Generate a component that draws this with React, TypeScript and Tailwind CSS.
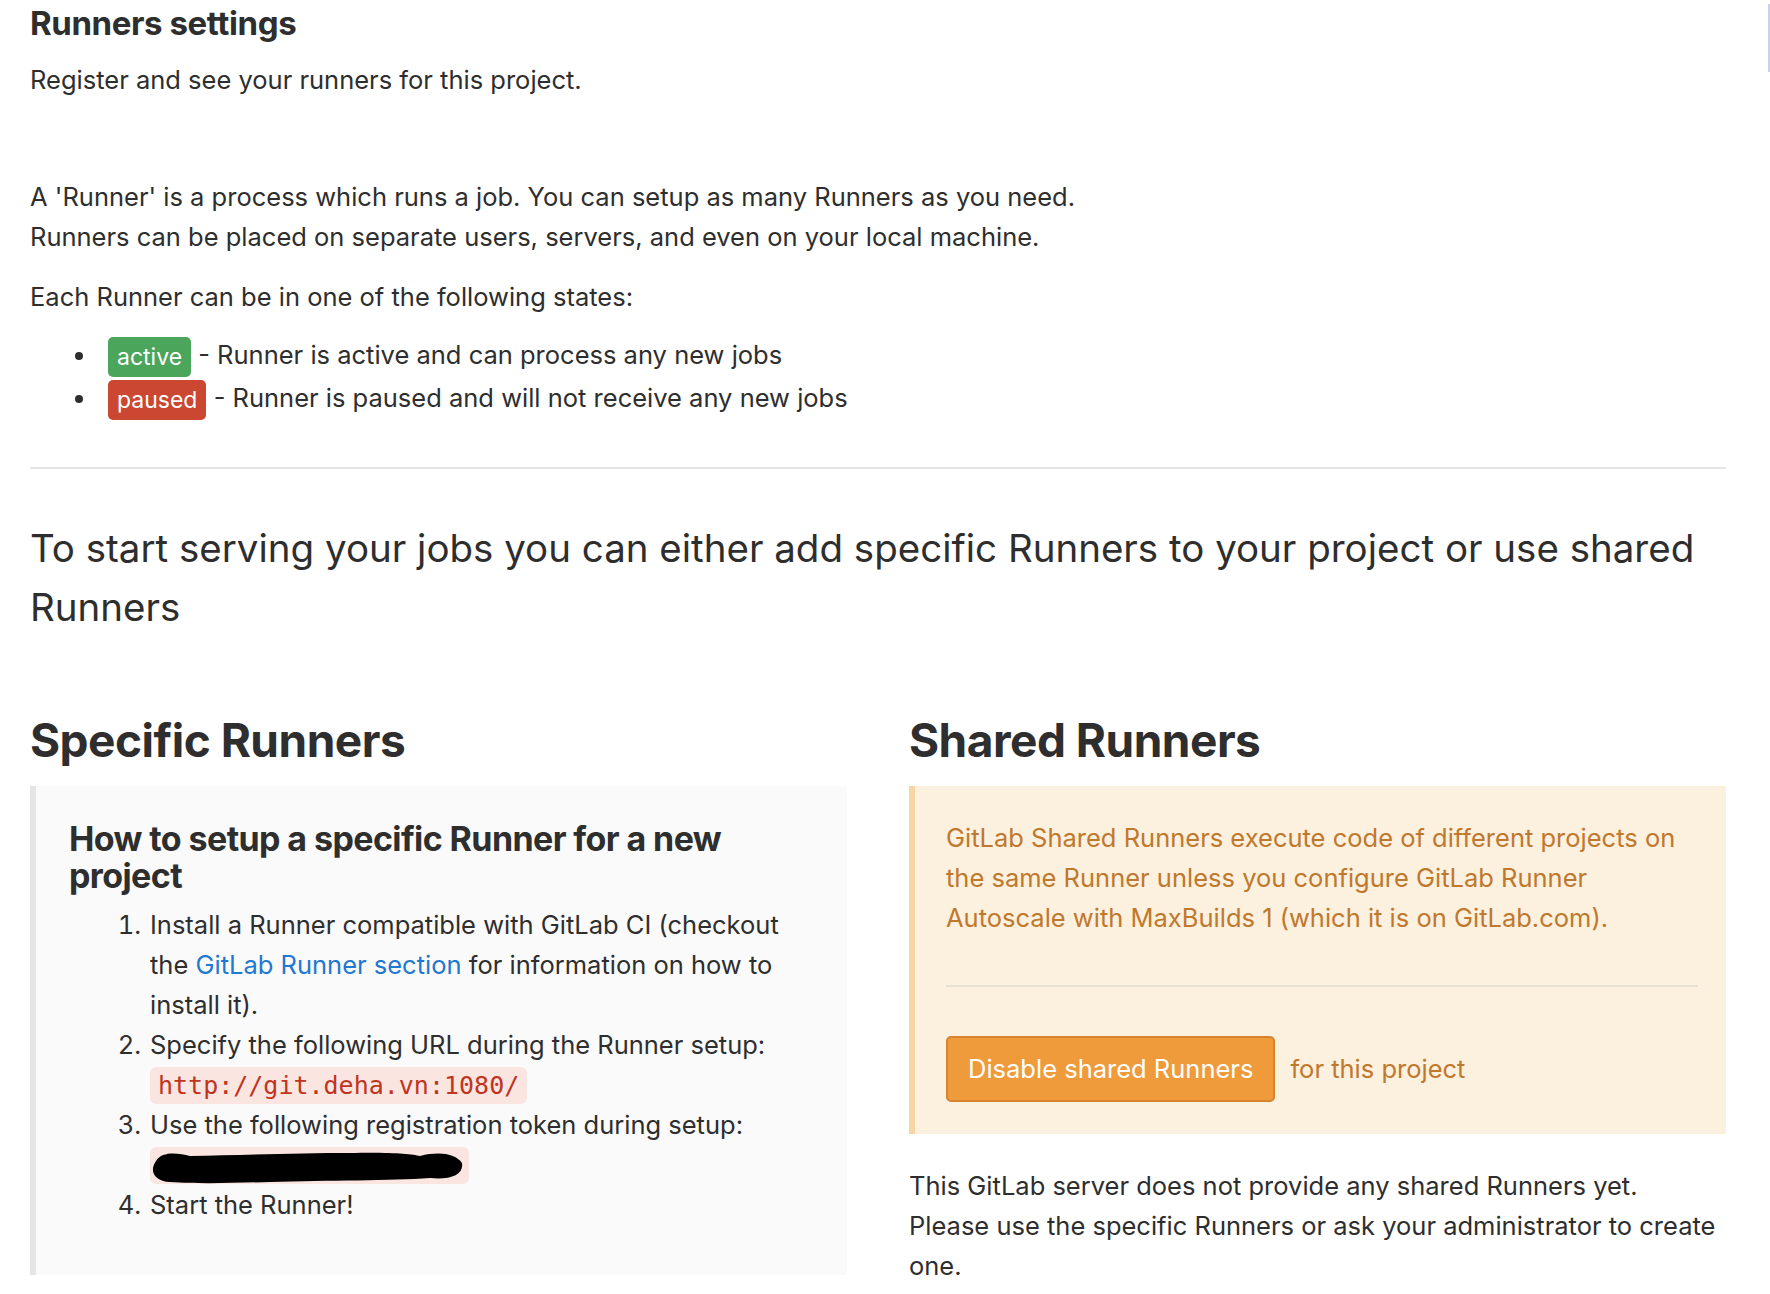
import React from "react";

const FONT = "font-['Inter','Noto_Sans',sans-serif]";

function Badge({ tone, children }: { tone: "green" | "red"; children: React.ReactNode }) {
  const cls = tone === "green" ? "bg-[#4ba55b]" : "bg-[#cb4731]";
  return (
    <span className={`inline-block rounded-[5px] px-[9px] text-[23px] leading-[40px] text-white align-middle ${cls}`}>
      {children}
    </span>
  );
}

export default function App() {
  return (
    <div className={`${FONT} min-h-[1294px] bg-white pl-[30px] pr-[44px] text-[#2e2e2e] text-[25.5px] leading-[40px] relative overflow-hidden`}>
      {/* scrollbar sliver on the far right */}
      <div className="absolute right-0 top-[4px] h-[68px] w-[2px] bg-[#c7d3ee]" />

      <h4 className="text-[33px] font-bold leading-[46px] tracking-[-0.4px]">Runners settings</h4>
      <p className="mt-[14px]">Register and see your runners for this project.</p>

      <div className="mt-[77px]">
        <p>
          A 'Runner' is a process which runs a job. You can setup as many Runners as you need.
          <br />
          Runners can be placed on separate users, servers, and even on your local machine.
        </p>
        <p className="mt-[20px]">Each Runner can be in one of the following states:</p>
        <ul className="mt-[17px] list-disc pl-[68px] marker:text-[#2e2e2e]">
          <li className="pl-[10px] leading-[42px]">
            <Badge tone="green">active</Badge> - Runner is active and can process any new jobs
          </li>
          <li className="pl-[10px] leading-[42px]">
            <Badge tone="red">paused</Badge> - Runner is paused and will not receive any new jobs
          </li>
        </ul>
      </div>

      <hr className="mt-[47px] border-t-2 border-[#e5e5e5]" />

      <p className="mt-[50px] text-[38.5px] font-normal leading-[59px] text-[#2e2e2e]">
        To start serving your jobs you can either add specific Runners to your project or use shared Runners
      </p>

      <div className="mt-[77px] grid grid-cols-2 gap-[62px]">
        {/* specific runners */}
        <div>
          <h3 className="text-[46px] font-bold leading-[52px] tracking-[-0.5px]">Specific Runners</h3>
          <div className="mt-[20px] border-l-[6px] border-[#e5e5e5] bg-[#fafafa] pl-[33px] pr-[30px] pt-[34px] pb-[50px]">
            <h4 className="text-[34px] font-bold leading-[37px] tracking-[-0.6px]">
              How to setup a specific Runner for a new project
            </h4>
            <ol className="mt-[11px] list-decimal pl-[79px]">
              <li className="pl-[2px]">
                Install a Runner compatible with GitLab CI (checkout the{" "}
                <a className="text-[#1f78d1]">GitLab Runner section</a> for information on how to install it).
              </li>
              <li className="pl-[2px]">
                Specify the following URL during the Runner setup:
                <div className="flex h-[40px] items-center">
                  <code className="rounded-[6px] bg-[#fbe5e1] px-[8px] font-['DejaVu_Sans_Mono',monospace] text-[25px] leading-[37px] text-[#c0341d]">
                    http://git.deha.vn:1080/
                  </code>
                </div>
              </li>
              <li className="pl-[2px]">
                Use the following registration token during setup:
                <div className="flex h-[40px] items-center">
                  <span className="relative block h-[37px] w-[319px] rounded-[6px] bg-[#fbe5e1]">
                    <svg className="absolute left-0 top-0" width="319" height="37" viewBox="0 0 319 37">
                      <path
                        d="M6 14 C12 4 28 6 40 9 C90 8 150 6 200 6 C240 5 262 7 270 9 C290 4 306 7 312 16 C314 28 300 33 280 31 C240 34 180 33 120 35 C80 36 50 37 20 35 C4 34 -1 24 6 14 Z"
                        fill="#000"
                      />
                    </svg>
                  </span>
                </div>
              </li>
              <li className="pl-[2px]">Start the Runner!</li>
            </ol>
          </div>
        </div>

        {/* shared runners */}
        <div>
          <h3 className="text-[46px] font-bold leading-[52px] tracking-[-0.5px]">Shared Runners</h3>
          <div className="mt-[20px] border-l-[6px] border-[#f5d6a4] bg-[#fcf0df] pl-[31px] pr-[28px] pt-[32px] pb-[32px]">
            <p className="text-[#c0782c]">
              GitLab Shared Runners execute code of different projects on the same Runner unless you configure GitLab
              Runner Autoscale with MaxBuilds 1 (which it is on GitLab.com).
            </p>
            <hr className="mt-[47px] border-t-2 border-[#e8e0d6]" />
            <div className="mt-[49px] flex items-center gap-[15px]">
              <button className="h-[66px] rounded-[5px] border-2 border-[#d8842e] bg-[#ef9a3b] px-[20px] text-[25.5px] text-white">
                Disable shared Runners
              </button>
              <span className="text-[#c0782c]">for this project</span>
            </div>
          </div>
          <p className="mt-[32px]">
            This GitLab server does not provide any shared Runners yet.
            <br />
            Please use the specific Runners or ask your administrator to create one.
          </p>
        </div>
      </div>
    </div>
  );
}
